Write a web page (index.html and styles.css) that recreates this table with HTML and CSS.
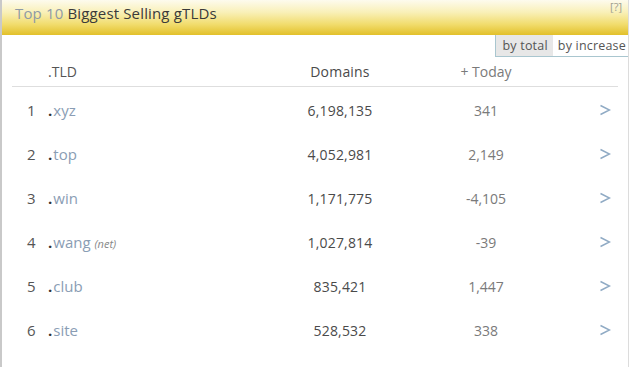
FILE: index.html
```html
<!DOCTYPE html>
<html>
<head>
<meta charset="utf-8">
<link rel="stylesheet" href="styles.css">
</head>
<body>
<div class="panel">
  <div class="head">
    <div class="title"><span class="muted">Top 10</span> Biggest Selling gTLDs</div>
    <div class="help">[?]</div>
  </div>
  <div class="tabbar">
    <div class="tabs">
      <span class="tab active">by total</span>
      <span class="tab">by increase</span>
    </div>
  </div>
  <div class="table">
    <div class="row hdr">
      <span class="rank"></span>
      <span class="tld">.TLD</span>
      <span class="num">Domains</span>
      <span class="today">+ Today</span>
      <span class="go"></span>
    </div>
    <div class="row">
      <span class="rank">1</span>
      <span class="tld"><b class="dot">.</b>xyz</span>
      <span class="num">6,198,135</span>
      <span class="today">341</span>
      <span class="go"><svg class="chev" viewBox="0 0 12 12"><path d="M1.5 1.5 L10.5 6 L1.5 10.5"/></svg></span>
    </div>
    <div class="row">
      <span class="rank">2</span>
      <span class="tld"><b class="dot">.</b>top</span>
      <span class="num">4,052,981</span>
      <span class="today">2,149</span>
      <span class="go"><svg class="chev" viewBox="0 0 12 12"><path d="M1.5 1.5 L10.5 6 L1.5 10.5"/></svg></span>
    </div>
    <div class="row">
      <span class="rank">3</span>
      <span class="tld"><b class="dot">.</b>win</span>
      <span class="num">1,171,775</span>
      <span class="today">-4,105</span>
      <span class="go"><svg class="chev" viewBox="0 0 12 12"><path d="M1.5 1.5 L10.5 6 L1.5 10.5"/></svg></span>
    </div>
    <div class="row">
      <span class="rank">4</span>
      <span class="tld"><b class="dot">.</b>wang <i class="note">(net)</i></span>
      <span class="num">1,027,814</span>
      <span class="today">-39</span>
      <span class="go"><svg class="chev" viewBox="0 0 12 12"><path d="M1.5 1.5 L10.5 6 L1.5 10.5"/></svg></span>
    </div>
    <div class="row">
      <span class="rank">5</span>
      <span class="tld"><b class="dot">.</b>club</span>
      <span class="num">835,421</span>
      <span class="today">1,447</span>
      <span class="go"><svg class="chev" viewBox="0 0 12 12"><path d="M1.5 1.5 L10.5 6 L1.5 10.5"/></svg></span>
    </div>
    <div class="row">
      <span class="rank">6</span>
      <span class="tld"><b class="dot">.</b>site</span>
      <span class="num">528,532</span>
      <span class="today">338</span>
      <span class="go"><svg class="chev" viewBox="0 0 12 12"><path d="M1.5 1.5 L10.5 6 L1.5 10.5"/></svg></span>
    </div>
    <div class="row">
      <span class="rank">7</span>
      <span class="tld"><b class="dot">.</b>online</span>
      <span class="num">470,302</span>
      <span class="today">512</span>
      <span class="go"><svg class="chev" viewBox="0 0 12 12"><path d="M1.5 1.5 L10.5 6 L1.5 10.5"/></svg></span>
    </div>
  </div>
</div>
</body>
</html>
```
FILE: styles.css
```css
html, body {
  margin: 0;
  padding: 0;
  background: #fff;
}
body {
  font-family: "Open Sans", "Noto Sans", sans-serif;
  font-size: 14px;
  color: #444;
}
.panel {
  width: 626px;
  height: 367px;
  overflow: hidden;
  border-left: 2px solid #c9c9c9;
  border-right: 1px solid #dcdcdc;
  background: #fff;
}
.head {
  height: 35px;
  box-sizing: border-box;
  display: flex;
  justify-content: space-between;
  align-items: flex-start;
  padding: 3px 6px 0 13px;
  background: linear-gradient(#fdfbee 0%, #f9f0b8 35%, #f1dc6c 70%, #e2c02a 100%);
}
.title {
  font-size: 15px;
  color: #3a3a3a;
  line-height: 21px;
  letter-spacing: 0.15px;
}
.muted {
  color: #8e9aa6;
}
.help {
  font-size: 11px;
  color: #a0a090;
  line-height: 12px;
  margin-top: -2px;
}
.tabbar {
  display: flex;
  justify-content: flex-end;
  height: 22px;
}
.tabs {
  display: flex;
  border-left: 1px solid #a9c6cf;
  border-bottom: 1px solid #a9c6cf;
  font-size: 12.5px;
  letter-spacing: 0.2px;
}
.tab {
  display: block;
  line-height: 21px;
  padding: 0 2px 0 5px;
  color: #555;
  background: #fff;
}
.tab.active {
  background: #e7e7e7;
  padding: 0 5px 0 6px;
}
.table {
  margin: 0 10px;
}
.row {
  display: grid;
  grid-template-columns: 34px 229px 130px 162px 1fr;
  align-items: center;
  height: 44px;
}
.row.hdr {
  height: 29px;
  border-bottom: 1px solid #dedede;
  margin-bottom: 1px;
  color: #555;
}
.rank {
  padding-left: 15px;
  color: #555;
  font-size: 15px;
}
.tld {
  color: #8a9db4;
  padding-left: 2px;
  font-size: 15px;
}
.hdr .tld {
  color: #555;
  font-size: 14px;
}
.dot {
  color: #333;
  font-weight: bold;
  margin-right: 1px;
}
.note {
  font-size: 11px;
  color: #888;
}
.num {
  text-align: center;
  color: #4a4a4a;
  letter-spacing: 0.2px;
}
.today {
  text-align: center;
  color: #7a7a7a;
}
.go {
  display: flex;
  justify-content: flex-end;
  padding-right: 7px;
}
.chev {
  width: 12px;
  height: 12px;
  fill: none;
  stroke: #8faac4;
  stroke-width: 1.4;
}
```
